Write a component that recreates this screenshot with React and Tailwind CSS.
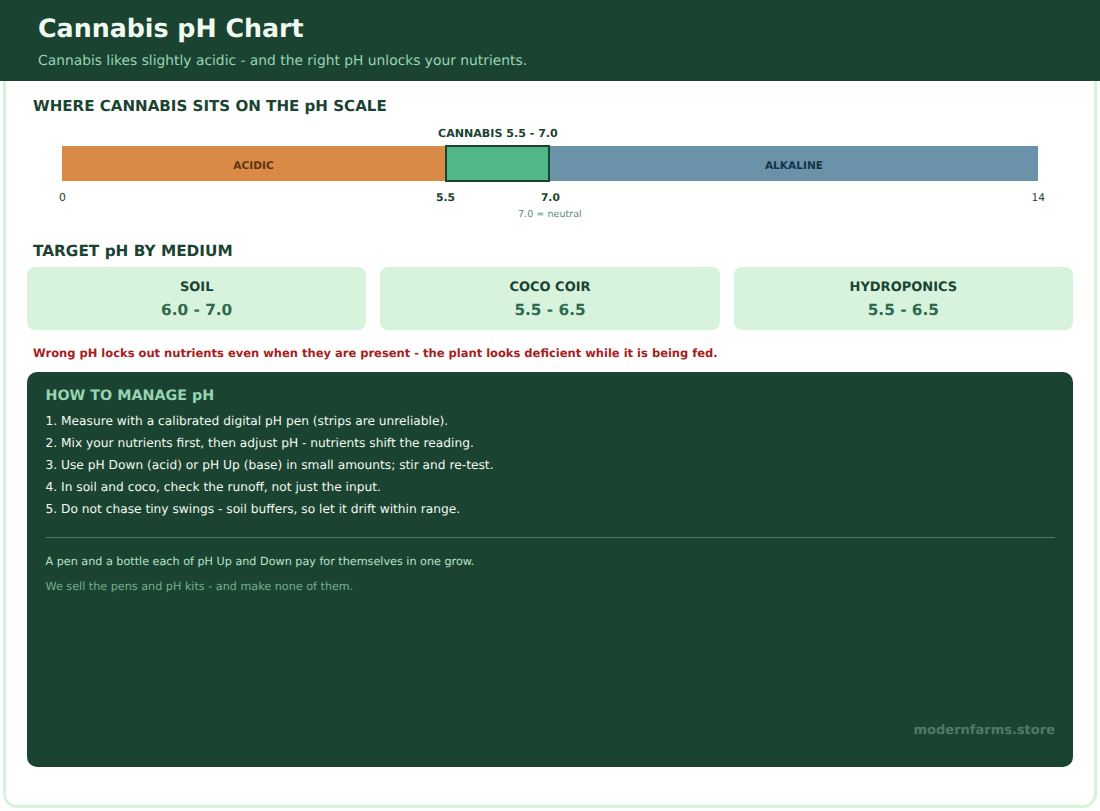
export default function App() {
  return (
    <div className="h-[811px] w-[1100px] overflow-hidden bg-white font-['DejaVu_Sans',sans-serif] text-[#1b4332] [text-rendering:geometricPrecision]">
      <div className="relative mx-[3px] h-[808px] rounded-b-[14px] border-[3px] border-t-0 border-[#d8f3dc]">
        <div className="absolute -left-[6px] -right-[6px] top-0 h-[81px] bg-[#1b4332] pl-[38px] pt-[12px]">
          <h1 className="text-[25.3px] leading-[33px] font-bold text-[#f1faee]">Cannabis pH Chart</h1>
          <p className="mt-[7px] text-[13.83px] leading-[18px] text-[#95d5b2]">Cannabis likes slightly acidic - and the right pH unlocks your nutrients.</p>
        </div>
        <div className="flex flex-col px-[21px] pt-[81px]">
          <h2 className="mt-[15px] pl-[6px] text-[15.08px] leading-[20px] font-bold">WHERE CANNABIS SITS ON THE pH SCALE</h2>
          <div className="relative mt-[11px] h-[99px]">
            <div className="absolute left-[411px] top-0 text-[11.08px] font-bold leading-[14px]">CANNABIS 5.5 - 7.0</div>
            <div className="absolute left-[35px] top-[19px] flex h-[35px] w-[976px] text-[10.6px] font-bold">
              <div className="flex w-[383px] items-center justify-center bg-[#d98a47] pt-[7px] text-[#5c3310]">ACIDIC</div>
              <div className="-my-px w-[105px] border-2 border-[#1b4332] bg-[#52b788]" />
              <div className="flex flex-1 items-center justify-center bg-[#6a92a8] pt-[7px] text-[#12344a]">ALKALINE</div>
            </div>
            <span className="absolute left-[32px] top-[64px] text-[10.8px] leading-[14px]">0</span>
            <span className="absolute left-[409px] top-[64px] text-[10.8px] font-bold leading-[14px]">5.5</span>
            <span className="absolute left-[514px] top-[64px] text-[10.6px] font-bold leading-[14px]">7.0</span>
            <span className="absolute left-[1004.5px] top-[64px] text-[10.6px] leading-[14px]">14</span>
            <span className="absolute left-[491px] top-[81px] text-[9.6px] leading-[13px] text-[#5a8a80]">7.0 = neutral</span>
          </div>
          <h2 className="mt-[15px] pl-[6px] text-[15.3px] leading-[20px] font-bold">TARGET pH BY MEDIUM</h2>
          <div className="mt-[6px] grid grid-cols-3 gap-[14px]">
            {[["SOIL", "6.0 - 7.0"], ["COCO COIR", "5.5 - 6.5"], ["HYDROPONICS", "5.5 - 6.5"]].map(([name, range]) => (
              <div key={name} className="flex h-[63px] flex-col items-center rounded-[8px] bg-[#d8f3dc] pt-[12px]">
                <div className="text-[13px] leading-[17px] font-bold">{name}</div>
                <div className="mt-[4px] text-[15.3px] leading-[20px] font-bold text-[#2d6a4f]">{range}</div>
              </div>
            ))}
          </div>
          <p className="mt-[16px] pl-[6px] text-[11.5px] leading-[15px] font-bold text-[#a61e1e]">Wrong pH locks out nutrients even when they are present - the plant looks deficient while it is being fed.</p>
          <div className="relative mt-[11px] flex h-[395px] flex-col rounded-[10px] bg-[#1b4332] px-[18.5px] pt-[15px]">
            <h3 className="text-[14.3px] leading-[19px] font-bold text-[#95d5b2]">HOW TO MANAGE pH</h3>
            <ol className="mt-[4px] flex flex-col text-[12.22px] leading-[22px] text-[#f1faee]">
              <li>1. Measure with a calibrated digital pH pen (strips are unreliable).</li>
              <li>2. Mix your nutrients first, then adjust pH - nutrients shift the reading.</li>
              <li>3. Use pH Down (acid) or pH Up (base) in small amounts; stir and re-test.</li>
              <li>4. In soil and coco, check the runoff, not just the input.</li>
              <li>5. Do not chase tiny swings - soil buffers, so let it drift within range.</li>
            </ol>
            <div className="mt-[17px] h-px bg-[#52796a]" />
            <p className="mt-[16px] text-[11.2px] leading-[15px] text-[#b7e4c7]">A pen and a bottle each of pH Up and Down pay for themselves in one grow.</p>
            <p className="mt-[10px] text-[11.2px] leading-[15px] text-[#74b08e]">We sell the pens and pH kits - and make none of them.</p>
            <span className="absolute right-[18px] bottom-[27px] text-[13px] font-bold text-[#4f7a68]">modernfarms.store</span>
          </div>
        </div>
      </div>
    </div>
  );
}
